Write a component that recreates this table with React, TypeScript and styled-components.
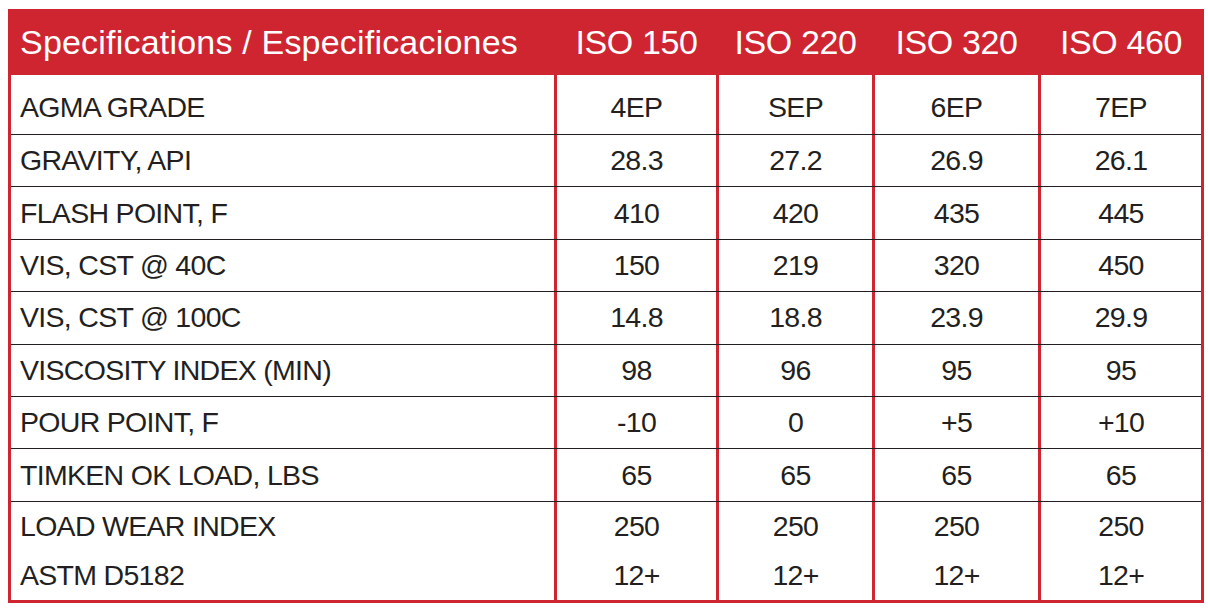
import React from "react";
import styled, { createGlobalStyle } from "styled-components";

const RED = "#cf2531";
const INK = "#231f20";

const GlobalStyle = createGlobalStyle`
  html, body {
    margin: 0;
    padding: 0;
    background: #ffffff;
  }
  body {
    font-family: "Liberation Sans", Arial, Helvetica, sans-serif;
    color: ${INK};
  }
`;

const columns = ["ISO 150", "ISO 220", "ISO 320", "ISO 460"];

const rows: { label: string; values: string[]; last?: boolean }[] = [
  { label: "AGMA GRADE", values: ["4EP", "SEP", "6EP", "7EP"] },
  { label: "GRAVITY, API", values: ["28.3", "27.2", "26.9", "26.1"] },
  { label: "FLASH POINT, F", values: ["410", "420", "435", "445"] },
  { label: "VIS, CST @ 40C", values: ["150", "219", "320", "450"] },
  { label: "VIS, CST @ 100C", values: ["14.8", "18.8", "23.9", "29.9"] },
  { label: "VISCOSITY INDEX (MIN)", values: ["98", "96", "95", "95"] },
  { label: "POUR POINT, F", values: ["-10", "0", "+5", "+10"] },
  { label: "TIMKEN OK LOAD, LBS", values: ["65", "65", "65", "65"] },
  { label: "LOAD WEAR INDEX", values: ["250", "250", "250", "250"], last: true },
  { label: "ASTM D5182", values: ["12+", "12+", "12+", "12+"], last: true },
];

function App() {
  return (
    <>
      <GlobalStyle />
      <Table>
        <HeaderRow>
          <HeadCell $first>Specifications / Especificaciones</HeadCell>
          {columns.map((c) => (
            <HeadCell key={c}>{c}</HeadCell>
          ))}
        </HeaderRow>
        <Body>
          {rows.map((r, i) => (
            <Row key={r.label} $first={i === 0} $plain={!!r.last}>
              <LabelCell $first={i === 0}>{r.label}</LabelCell>
              {r.values.map((v, j) => (
                <ValueCell key={j} $first={i === 0}>
                  {v}
                </ValueCell>
              ))}
            </Row>
          ))}
        </Body>
      </Table>
    </>
  );
}

const GRID = "543px 162px 156px 166px 163px";

const Table = styled.div`
  margin: 9px 0 0 8px;
  width: 1196px;
`;

const HeaderRow = styled.div`
  display: grid;
  grid-template-columns: ${GRID};
  height: 66px;
  padding: 0 3px;
  background: ${RED};
  color: #ffffff;
`;

const HeadCell = styled.div<{ $first?: boolean }>`
  display: flex;
  align-items: center;
  justify-content: ${(p) => (p.$first ? "flex-start" : "center")};
  padding: ${(p) => (p.$first ? "0 0 0 9px" : "0 0 0 3px")};
  font-size: 34px;
  letter-spacing: ${(p) => (p.$first ? "0.2px" : "-0.4px")};
  white-space: nowrap;
`;

const Body = styled.div`
  border: 3px solid ${RED};
  border-top: none;
`;

const Row = styled.div<{ $first?: boolean; $plain?: boolean }>`
  display: grid;
  grid-template-columns: ${GRID};
  height: ${(p) => (p.$first ? "59px" : p.$plain ? "49px" : "51.4px")};
  border-bottom: ${(p) => (p.$plain ? "none" : `1px solid ${INK}`)};
  font-size: 28.5px;
  letter-spacing: -0.7px;
`;

const LabelCell = styled.div<{ $first?: boolean }>`
  display: flex;
  align-items: center;
  padding: ${(p) => (p.$first ? "6px 0 0 9px" : "0 0 0 9px")};
  white-space: nowrap;
`;

const ValueCell = styled.div<{ $first?: boolean }>`
  display: flex;
  align-items: center;
  justify-content: center;
  padding-top: ${(p) => (p.$first ? "6px" : "0")};
  border-left: 3px solid ${RED};
  white-space: nowrap;
`;

export default App;
